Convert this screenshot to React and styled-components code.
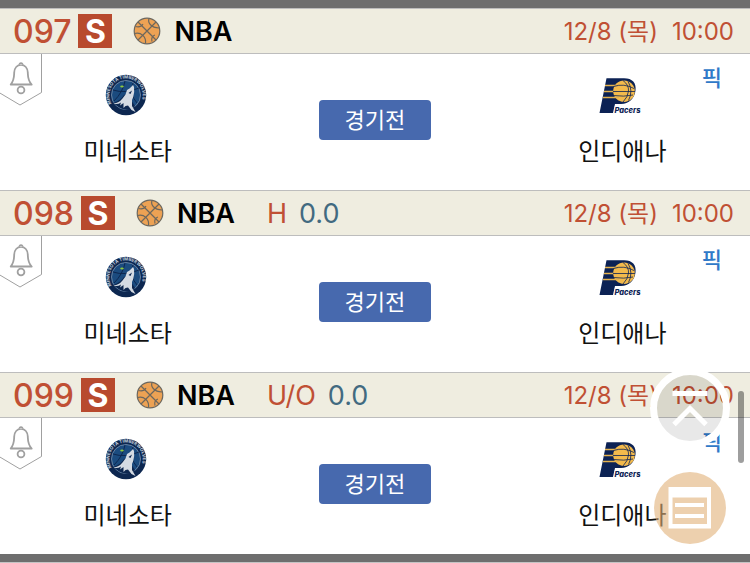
import React from 'react'
import styled, { createGlobalStyle } from 'styled-components'

const GlobalStyle = createGlobalStyle`
  * {
    box-sizing: border-box;
  }

  body {
    margin: 0;
    background: #fff;
    color: #111;
    font-family: Inter, "Noto Sans CJK KR", sans-serif;
  }

  button {
    padding: 0;
    border: 0;
    background: none;
    font: inherit;
    cursor: pointer;
  }
`

const Page = styled.main`
  border-top: 8px solid #6e6e6e;
`

const PageEnd = styled.footer`
  height: 9px;
  background: #6e6e6e;
  border-bottom: 1px solid #c4c4c4;
`

const GameHeader = styled.header`
  display: flex;
  align-items: center;
  height: 46px;
  padding: 0 16px 0 13px;
  background: #efede0;
  border-top: 1px solid #bdbdbd;
  border-bottom: 1px solid #bdbdbd;
  line-height: 44px;
  white-space: nowrap;
`

const GameNumber = styled.span`
  padding-top: 2px;
  color: #c05034;
  font-size: 32px;
  font-weight: 500;
`

const SingleBadge = styled.span`
  width: 34px;
  height: 34px;
  margin: 0 21px 0 7px;
  background: #b84a2e;
  color: #fff;
  font-size: 32px;
  font-weight: 700;
  line-height: 36px;
  text-align: center;
`

const League = styled.h2`
  margin: 0 32px 0 13px;
  padding-top: 2px;
  color: #000;
  font-size: 27px;
  font-weight: 600;
`

const Handicap = styled.span`
  display: flex;
  gap: 12px;
  padding-top: 2px;
  color: #c05034;
  font-size: 27px;
`

const HandicapValue = styled.span`
  color: #426a80;
`

const StartTime = styled.time`
  display: flex;
  gap: 14px;
  margin-left: auto;
  padding-top: 2px;
  color: #c05034;
  font-size: 24px;
`

const GameBody = styled.div`
  position: relative;
  display: grid;
  grid-template-columns: 1fr 1fr 1fr;
  justify-items: center;
  height: 136px;
  padding: 0 4px;
`

const AlarmButton = styled.button`
  position: absolute;
  top: 0;
  left: 0;

  svg {
    display: block;
  }
`

const Team = styled.div`
  display: flex;
  flex-direction: column;
  align-items: center;
  gap: 10px;
  padding-top: 20px;
`

const TeamLogo = styled.div`
  display: flex;
  align-items: center;
  height: 42px;
  padding-right: 4px;
`

const TeamName = styled.span`
  font-size: 24px;
  line-height: 52px;
`

const StatusButton = styled.button`
  && {
    width: 112px;
    height: 40px;
    margin-top: 46px;
    border-radius: 4px;
    background: #4769ae;
    color: #fff;
    font-size: 22px;
    line-height: 40px;
  }
`

const PickLink = styled.a`
  position: absolute;
  top: 8px;
  right: 28px;
  color: #3079c8;
  font-size: 22px;
  font-weight: 500;
  line-height: 32px;
  text-decoration: none;
`

const FloatingActions = styled.div`
  position: fixed;
  right: 20px;
  bottom: 19px;
  display: flex;
  flex-direction: column;
  align-items: center;
  gap: 24px;
`

const FloatingButton = styled.button`
  svg {
    display: block;
  }
`

const ScrollThumb = styled.div`
  position: fixed;
  top: 391px;
  right: 6px;
  width: 6px;
  height: 72px;
  border-radius: 3px;
  background: rgba(0, 0, 0, 0.38);
`

const Basketball = () => (
  <svg width="28" height="28" viewBox="0 0 28 28" fill="none" stroke="#6c675e" strokeWidth="1.2" aria-hidden="true">
    <circle cx="14" cy="14" r="12.8" fill="#eda254" />
    <path d="M5 5 23 23M23 5 5 23" />
    <path d="M16 1.500C14.500 6 18 10.500 26 11M1.500 16.500C8 14.500 13.500 20 12.500 26.500M2.500 9.500C6 10.500 8.500 9.500 10 7M19 24.500C18 21.500 19.500 18.500 22 18" />
  </svg>
)

const BellTag = () => (
  <svg width="42" height="53" viewBox="0 0 42 53" fill="#fff" stroke="#a0a0a0" aria-hidden="true">
    <path d="M41.500 -1V38.500L20 51 -1 38.500V-1" />
    <path strokeWidth="1.800" strokeLinejoin="round" d="M10.700 30.500C14.500 26 14 22 14.200 18.500C14.500 13.500 17.500 10.800 21 10.800S27.500 13.500 27.800 18.500C28 22 27.500 26 31.700 30.500Z" />
    <path strokeWidth="1.800" d="M19.500 10.800C19.500 8.500 22.500 8.500 22.500 10.800" />
    <circle cx="21" cy="36" r="3.400" strokeWidth="1.800" />
  </svg>
)

const WolvesLogo = () => (
  <svg width="42" height="42" viewBox="0 0 42 42" role="img" aria-label="미네소타">
    <defs>
      <path id="wolves-ring" d="M6.500 29.500A16.700 16.700 0 1 1 35.500 29.500" />
    </defs>
    <circle cx="21" cy="21" r="20.200" fill="#0d2750" />
    <circle cx="21" cy="21" r="14.500" fill="#1b4b7f" stroke="#8ba1b9" strokeWidth=".7" />
    <path d="M8 16Q20 20 34 14M9 27Q18 18 20 7M28 9Q24 20 32 29" fill="none" stroke="#0d2750" />
    <text fill="#c3cedb" fontFamily="Inter, sans-serif" fontSize="4.500" fontWeight="700">
      <textPath href="#wolves-ring">MINNESOTA TIMBERWOLVES</textPath>
    </text>
    <path fill="#0d2750" d="M8 29Q15 27 19 21L22 20 30 32 26 36Q16 36 11 31Z" />
    <path fill="#d5dbe3" d="M8.500 29.500Q14 29 17.500 24.500L20.500 20.500 22 16 24.500 14.500 28 11 29 13 29.200 18Q28.500 23 27 26L27 32 30.500 38 26.500 36 23 31.500 20.500 32 18.500 34 18.500 29 15 31.500 16 28.500Q12 31 8.500 29.500Z" />
    <path fill="#0d2750" d="M23.500 19 27 16.500 25.500 20Z" />
    <ellipse cx="17" cy="12.500" rx="1.800" ry="1" fill="#8fc83e" />
  </svg>
)

const PacersLogo = () => (
  <svg width="42" height="37" viewBox="0 0 42 37" role="img" aria-label="인디애나">
    <path fill="#0c2254" d="M7.500 1.200H25C33.500 1.200 37.500 6 36.500 13.500C35.500 21.500 30 27 22 27H16L14 36H.5Z" />
    <circle cx="25" cy="14.200" r="10.800" fill="#f3ba4c" />
    <path fill="none" stroke="#e4b24e" strokeWidth="1.300" d="M6 8.500H20M5 14.500H18M4 20.500H20" />
    <path fill="none" stroke="#0c2254" strokeWidth=".8" d="M14.500 9.500Q25 6 35 11.500M14 14.500H36M14.500 18.500Q25 20 34 18M24 3.500Q30 8 29.500 14T24 25M29 4.200Q34.500 14 29.500 23.500" />
    <text x="15.500" y="35.500" fill="#0c2254" stroke="#fff" strokeWidth="1.500" paintOrder="stroke" fontFamily="Inter, sans-serif" fontSize="7.500" fontStyle="italic" fontWeight="800">Pacers</text>
  </svg>
)

const ToTopIcon = () => (
  <svg width="80" height="80" viewBox="0 0 80 80" fill="none" stroke="#fff" aria-hidden="true">
    <circle cx="40" cy="40" r="36.500" strokeWidth="7" fill="#000" fillOpacity=".09" />
    <path strokeWidth="5" d="M22.500 25.500H57.500M24 56.500 40 40.500 56 56.500" />
  </svg>
)

const ListIcon = () => (
  <svg width="72" height="72" viewBox="0 0 72 72" aria-hidden="true">
    <circle cx="36" cy="36" r="36" fill="#e1b178" fillOpacity=".6" />
    <path fill="#fff" fillRule="evenodd" d="M14.500 15H57V56.500H14.500ZM18.500 25.500V52H53V25.500Z" />
    <path fill="none" stroke="#fff" strokeWidth="4" d="M21 33H50M21 44H50" />
  </svg>
)

const games = [
  { number: '097' },
  { number: '098', type: 'H', value: '0.0' },
  { number: '099', type: 'U/O', value: '0.0' }
]

const Game = ({ game }) => (
  <article>
    <GameHeader>
      <GameNumber>{game.number}</GameNumber>
      <SingleBadge>S</SingleBadge>
      <Basketball />
      <League>NBA</League>
      {game.type &&
        <Handicap>
          {game.type}
          <HandicapValue>{game.value}</HandicapValue>
        </Handicap>
      }
      <StartTime>
        <span>12/8 (목)</span>
        <span>10:00</span>
      </StartTime>
    </GameHeader>
    <GameBody>
      <Team>
        <TeamLogo><WolvesLogo /></TeamLogo>
        <TeamName>미네소타</TeamName>
      </Team>
      <StatusButton type="button">경기전</StatusButton>
      <Team>
        <TeamLogo><PacersLogo /></TeamLogo>
        <TeamName>인디애나</TeamName>
      </Team>
      <AlarmButton type="button" aria-label="알림"><BellTag /></AlarmButton>
      <PickLink href="#pick">픽</PickLink>
    </GameBody>
  </article>
)

const App = () => (
  <>
    <GlobalStyle />
    <Page>
      {games.map((game) => <Game key={game.number} game={game} />)}
    </Page>
    <PageEnd />
    <FloatingActions>
      <FloatingButton type="button" aria-label="맨 위로"><ToTopIcon /></FloatingButton>
      <FloatingButton type="button" aria-label="목록"><ListIcon /></FloatingButton>
    </FloatingActions>
    <ScrollThumb />
  </>
)

export default App
